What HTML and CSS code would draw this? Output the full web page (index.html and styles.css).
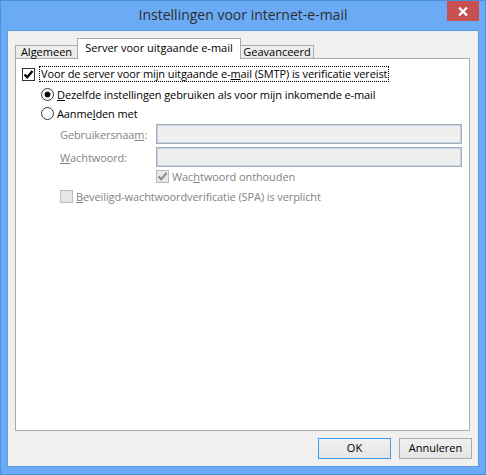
FILE: index.html
```html
<!DOCTYPE html>
<html lang="nl">
<head>
<meta charset="utf-8">
<title>Instellingen voor internet-e-mail</title>
<link rel="stylesheet" href="styles.css">
</head>
<body>
<div class="window">
  <div class="titlebar">
    <span class="title">Instellingen voor internet-e-mail</span>
    <div class="close">
      <svg width="10" height="9" viewBox="0 0 10 9"><path d="M1 0.5 L9 8.5 M9 0.5 L1 8.5" stroke="#fff" stroke-width="2.2" fill="none"/></svg>
    </div>
  </div>
  <div class="client">
    <div class="tabs">
      <div class="tab tab-algemeen">Algemeen</div>
      <div class="tab tab-server active">Server voor uitgaande e-mail</div>
      <div class="tab tab-geav">Geavanceerd</div>
    </div>
    <div class="panel">
      <div class="row row-main">
        <span class="cb"><svg width="11" height="11" viewBox="0 0 11 11"><path d="M1.5 5.5 L4.2 8.3 L9.5 2" stroke="#000" stroke-width="2.2" fill="none"/></svg></span>
        <span class="focus">Voor de server voor mijn uitgaande e-<u>m</u>ail (SMTP) is verificatie vereist</span>
      </div>
      <div class="row row-radio1">
        <span class="radio checked"></span>
        <span class="lbl"><u>D</u>ezelfde instellingen gebruiken als voor mijn inkomende e-mail</span>
      </div>
      <div class="row row-radio2">
        <span class="radio"></span>
        <span class="lbl">Aanme<u>l</u>den met</span>
      </div>
      <div class="field field-1">
        <span class="flabel">Gebruikersnaa<u>m</u>:</span>
        <span class="input"></span>
      </div>
      <div class="field field-2">
        <span class="flabel"><u>W</u>achtwoord:</span>
        <span class="input"></span>
      </div>
      <div class="row row-remember">
        <span class="cb disabled"><svg width="11" height="11" viewBox="0 0 11 11"><path d="M1.5 5.5 L4.2 8.3 L9.5 2" stroke="#8a8a8a" stroke-width="2" fill="none"/></svg></span>
        <span class="lbl dis">Wac<u>h</u>twoord onthouden</span>
      </div>
      <div class="row row-spa">
        <span class="cb disabled"></span>
        <span class="lbl dis"><u>B</u>eveiligd-wachtwoordverificatie (SPA) is verplicht</span>
      </div>
    </div>
    <div class="buttons">
      <div class="btn default">OK</div>
      <div class="btn">Annuleren</div>
    </div>
  </div>
</div>
</body>
</html>
```
FILE: styles.css
```css
html, body {
  margin: 0;
  padding: 0;
}
body {
  font-family: "Open Sans", "Noto Sans", sans-serif;
  font-size: 11px;
  color: #000;
}
.window {
  width: 486px;
  height: 475px;
  box-sizing: border-box;
  border: 1px solid #4e8fdb;
  background: #6babf6;
  display: flex;
  flex-direction: column;
  padding: 0 6px 7px 6px;
}
.titlebar {
  height: 29px;
  position: relative;
  display: flex;
  justify-content: center;
  margin: 0 -6px;
}
.title {
  font-size: 14px;
  color: #2e2e2e;
  line-height: 29px;
  margin-top: -1px;
}
.close {
  position: absolute;
  right: 6px;
  top: 0;
  width: 32px;
  height: 20px;
  background: #c75050;
  display: flex;
  align-items: center;
  justify-content: center;
}
.close svg { display: block; }
.client {
  flex: 1;
  border: 1px solid #5c9be2;
  background: #f0f0f0;
  padding: 7px;
  display: flex;
  flex-direction: column;
}
.tabs {
  height: 20px;
  display: flex;
  align-items: flex-end;
  position: relative;
  z-index: 2;
}
.tab {
  box-sizing: border-box;
  height: 13px;
  border: 1px solid #acacac;
  border-bottom: none;
  background: linear-gradient(#f0f0f0, #e9e9e9);
  line-height: 11px;
  text-align: center;
  white-space: nowrap;
  overflow: visible;
}
.tab-algemeen { width: 63px; margin-right: -1px; }
.tab-server { width: 164px; margin-right: -1px; }
.tab-geav { width: 74px; }
.tab.active {
  height: 21px;
  margin-bottom: -1px;
  background: #fff;
  line-height: 18px;
  position: relative;
  z-index: 3;
}
.panel {
  flex: 1;
  background: #fff;
  border: 1px solid #acacac;
  position: relative;
  z-index: 1;
  padding-left: 6px;
  margin-right: 1px;
  letter-spacing: -0.1px;
}
.row {
  display: flex;
  align-items: center;
  height: 16px;
  white-space: nowrap;
}
.row-main { margin-top: 7px; }
.row-radio1 { margin-top: 4px; margin-left: 19px; }
.row-radio2 { margin-top: 3px; margin-left: 19px; }
.cb {
  width: 13px;
  height: 13px;
  box-sizing: border-box;
  border: 1px solid #333;
  background: #fff;
  display: flex;
  align-items: center;
  justify-content: center;
  flex: none;
}
.cb svg { display: block; }
.cb.disabled {
  border-color: #bcbcbc;
  background: #e6e6e6;
}
.focus {
  margin-left: 4px;
  border: 1px dotted #000;
  padding: 0 1px;
  line-height: 14px;
}
.radio {
  width: 13px;
  height: 13px;
  box-sizing: border-box;
  border: 1px solid #333;
  border-radius: 50%;
  background: #fff;
  display: flex;
  align-items: center;
  justify-content: center;
  flex: none;
}
.radio.checked::after {
  content: "";
  width: 5px;
  height: 5px;
  border-radius: 50%;
  background: #000;
  box-shadow: 0 0 0 0.5px #555;
}
.lbl { margin-left: 3px; }
.dis { color: #838383; }
.field {
  display: flex;
  align-items: center;
  height: 20px;
  margin-left: 38px;
  color: #838383;
}
.field-1 { margin-top: 3px; }
.field-2 { margin-top: 3px; }
.flabel { width: 96px; flex: none; }
.input {
  width: 306px;
  height: 20px;
  box-sizing: border-box;
  border: 1px solid #abadb3;
  box-shadow: inset 0 0 0 1px #bdd3ee;
  background: #efefef;
}
.row-remember { margin-top: 1px; margin-left: 134px; }
.row-spa { margin-top: 4px; margin-left: 38px; }
.buttons {
  display: flex;
  justify-content: flex-end;
  gap: 8px;
  margin-top: 7px;
  margin-right: -1px;
}
.btn {
  width: 73px;
  height: 21px;
  box-sizing: border-box;
  border: 1px solid #acacac;
  background: linear-gradient(#f0f0f0, #e5e5e5);
  text-align: center;
  line-height: 18px;
}
.btn.default {
  border-color: #3c9af5;
}
```
